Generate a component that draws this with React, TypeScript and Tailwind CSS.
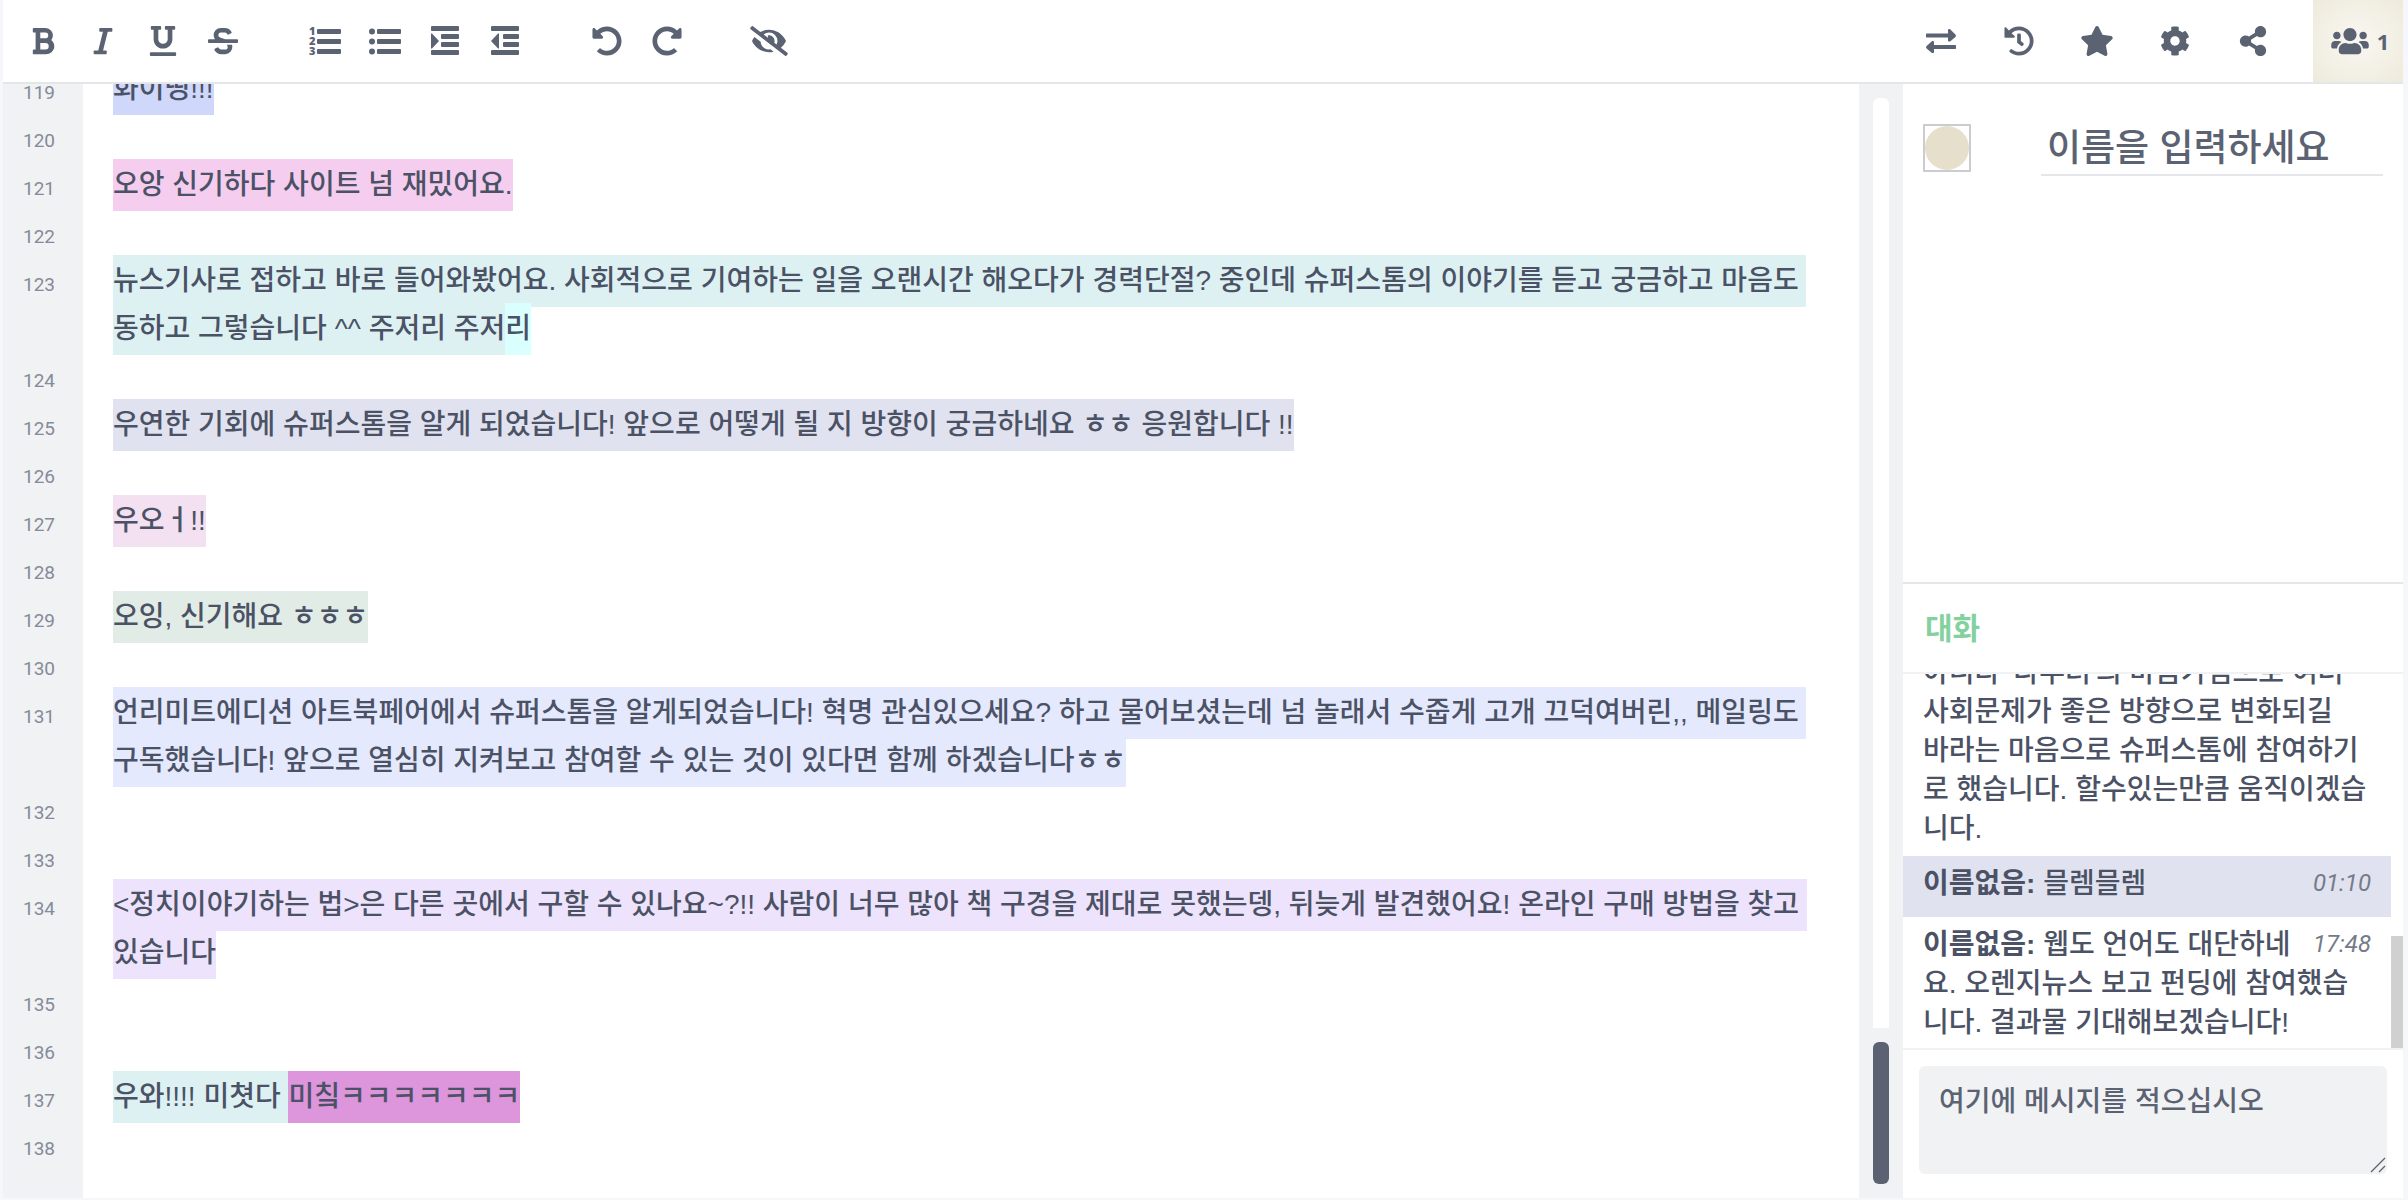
import { ReactNode } from "react";
import {
  FaBold,
  FaItalic,
  FaUnderline,
  FaStrikethrough,
  FaUndoAlt,
  FaRedoAlt,
  FaEyeSlash,
  FaHistory,
  FaStar,
  FaCog,
  FaShareAlt,
  FaUsers,
} from "react-icons/fa";

interface Part {
  text: string;
  color: string;
}

interface Line {
  no: number;
  parts: Part[];
}

interface Message {
  author?: string;
  text: string;
  time?: string;
  className: string;
}

interface Tool {
  label: string;
  icon: ReactNode;
}

const icon = "w-auto h-[30px]";
const wideIcon = "w-[38px] h-[30px] shrink-0";

const ListOlIcon = () => (
  <svg viewBox="0 0 32 30" className="h-[30px]" fill="currentColor" aria-hidden="true">
    <g fontFamily="Open Sans, sans-serif" fontWeight="800" fontSize="11">
      <text x="0" y="9">1</text>
      <text x="0" y="19">2</text>
      <text x="0" y="29">3</text>
    </g>
    <rect x="8" y="3" width="24" height="5" rx="1" />
    <rect x="8" y="13" width="24" height="5" rx="1" />
    <rect x="8" y="23" width="24" height="5" rx="1" />
  </svg>
);

const ListUlIcon = () => (
  <svg viewBox="0 0 32 30" className="h-[30px]" fill="currentColor" aria-hidden="true">
    <circle cx="3" cy="5.5" r="3" />
    <circle cx="3" cy="15.5" r="3" />
    <circle cx="3" cy="25.5" r="3" />
    <rect x="8" y="3" width="24" height="5" rx="1" />
    <rect x="8" y="13" width="24" height="5" rx="1" />
    <rect x="8" y="23" width="24" height="5" rx="1" />
  </svg>
);

const IndentIcon = ({ out = false }: { out?: boolean }) => (
  <svg viewBox="0 0 28 30" className="h-[30px]" fill="currentColor" aria-hidden="true">
    <rect x="0" y="0" width="28" height="5" rx="1" />
    <rect x={out ? 12 : 10} y="8" width={out ? 16 : 18} height="5" rx="1" />
    <rect x={out ? 12 : 10} y="16" width={out ? 16 : 18} height="5" rx="1" />
    <rect x="0" y="24" width="28" height="5" rx="1" />
    <path d={out ? "M8 7.5V22.5H7L0 15L7 7.5Z" : "M0 7.5V22.5H1L8 15L1 7.5Z"} />
  </svg>
);

const ExchangeIcon = () => (
  <svg viewBox="0 0 30 30" className="h-[30px]" fill="currentColor" aria-hidden="true">
    <path d="M1 7.5H22V4.2C22 3 23.5 2.6 24.4 3.4L29.4 8.6C30.1 9.3 30.1 10.2 29.4 10.9L24.4 15.2C23.5 16 22 15.6 22 14.4V11.5H1C0.4 11.5 0 11 0 10.4V8.6C0 8 0.4 7.5 1 7.5Z" />
    <path d="M29 19H8V16.2C8 15 6.5 14.6 5.6 15.4L0.6 20.1C-0.1 20.8 -0.1 21.7 0.6 22.4L5.6 26.7C6.5 27.5 8 27.1 8 25.9V23H29C29.6 23 30 22.5 30 21.9V20.1C30 19.5 29.6 19 29 19Z" />
  </svg>
);

const toolGroups: Tool[][] = [
  [
    { label: "굵게", icon: <FaBold className={icon} /> },
    { label: "기울임", icon: <FaItalic className={icon} /> },
    { label: "밑줄", icon: <FaUnderline className={icon} /> },
    { label: "취소선", icon: <FaStrikethrough className={icon} /> },
  ],
  [
    { label: "순서 있는 목록", icon: <ListOlIcon /> },
    { label: "순서 없는 목록", icon: <ListUlIcon /> },
    { label: "들여쓰기", icon: <IndentIcon /> },
    { label: "내어쓰기", icon: <IndentIcon out /> },
  ],
  [
    { label: "실행 취소", icon: <FaUndoAlt className={icon} /> },
    { label: "다시 실행", icon: <FaRedoAlt className={icon} /> },
  ],
  [{ label: "저자 색 지우기", icon: <FaEyeSlash className={wideIcon} /> }],
];

const menuTools: Tool[] = [
  { label: "가져오기/내보내기", icon: <ExchangeIcon /> },
  { label: "시간 슬라이더", icon: <FaHistory className={icon} /> },
  { label: "판 저장", icon: <FaStar className={wideIcon} /> },
  { label: "설정", icon: <FaCog className={icon} /> },
  { label: "공유", icon: <FaShareAlt className={icon} /> },
];

const lines: Line[] = [
  { no: 119, parts: [{ text: "화이띵!!!", color: "bg-[#cfd8fb]" }] },
  { no: 120, parts: [] },
  { no: 121, parts: [{ text: "오앙 신기하다 사이트 넘 재밌어요.", color: "bg-[#f5cdef]" }] },
  { no: 122, parts: [] },
  {
    no: 123,
    parts: [
      {
        text: "뉴스기사로 접하고 바로 들어와봤어요. 사회적으로 기여하는 일을 오랜시간 해오다가 경력단절? 중인데 슈퍼스톰의 이야기를 듣고 궁금하고 마음도 동하고 그렇습니다 ^^ 주저리 주저",
        color: "bg-[#ddf1f3]",
      },
      { text: "리", color: "bg-[#daffff]" },
    ],
  },
  { no: 124, parts: [] },
  {
    no: 125,
    parts: [
      {
        text: "우연한 기회에 슈퍼스톰을 알게 되었습니다! 앞으로 어떻게 될 지 방향이 궁금하네요 ㅎㅎ 응원합니다 !!",
        color: "bg-[#e1e2ef]",
      },
    ],
  },
  { no: 126, parts: [] },
  { no: 127, parts: [{ text: "우오ㅓ!!", color: "bg-[#f3e1f1]" }] },
  { no: 128, parts: [] },
  { no: 129, parts: [{ text: "오잉, 신기해요 ㅎㅎㅎ", color: "bg-[#e2ece6]" }] },
  { no: 130, parts: [] },
  {
    no: 131,
    parts: [
      {
        text: "언리미트에디션 아트북페어에서 슈퍼스톰을 알게되었습니다! 혁명 관심있으세요? 하고 물어보셨는데 넘 놀래서 수줍게 고개 끄덕여버린,, 메일링도 구독했습니다! 앞으로 열심히 지켜보고 참여할 수 있는 것이 있다면 함께 하겠습니다ㅎㅎ",
        color: "bg-[#e4e9fd]",
      },
    ],
  },
  { no: 132, parts: [] },
  { no: 133, parts: [] },
  {
    no: 134,
    parts: [
      {
        text: "<정치이야기하는 법>은 다른 곳에서 구할 수 있나요~?!! 사람이 너무 많아 책 구경을 제대로 못했는뎅, 뒤늦게 발견했어요! 온라인 구매 방법을 찾고 있습니다",
        color: "bg-[#eee3fc]",
      },
    ],
  },
  { no: 135, parts: [] },
  { no: 136, parts: [] },
  {
    no: 137,
    parts: [
      { text: "우와!!!! 미쳣다 ", color: "bg-[#ddf1f3]" },
      { text: "미칰ㅋㅋㅋㅋㅋㅋㅋ", color: "bg-[#dd95dc]" },
    ],
  },
  { no: 138, parts: [] },
];

const messages: Message[] = [
  {
    text: "아니라 '나부터'의 마음가짐으로 여러 사회문제가 좋은 방향으로 변화되길\n바라는 마음으로 슈퍼스톰에 참여하기로 했습니다. 할수있는만큼 움직이겠습니다.",
    className: "pb-2",
  },
  { author: "이름없음:", text: "믈렘믈렘", time: "01:10", className: "bg-[#e1e2ef] pt-2 pb-[14px]" },
  {
    author: "이름없음:",
    text: "웹도 언어도 대단하네요. 오렌지뉴스 보고 펀딩에 참여했습니다. 결과물 기대해보겠습니다!",
    time: "17:48",
    className: "pt-2 pb-[6px]",
  },
];

const Toolbar = () => (
  <header className="flex h-[84px] shrink-0 justify-between border-b-2 border-[#e4e6ea] bg-white text-[#5b6373]">
    <div className="flex gap-[42px] pl-[10px]">
      {toolGroups.map((group, index) => (
        <div key={index} className="flex">
          {group.map((tool) => (
            <button key={tool.label} aria-label={tool.label} className="flex w-[60px] items-center justify-center">
              {tool.icon}
            </button>
          ))}
        </div>
      ))}
    </div>
    <div className="flex">
      {menuTools.map((tool) => (
        <button key={tool.label} aria-label={tool.label} className="flex w-[78px] items-center justify-center">
          {tool.icon}
        </button>
      ))}
      <button
        aria-label="사용자"
        className="ml-[21px] flex w-[90px] items-center justify-center gap-2 bg-radial from-[#f9f7f2] to-[#eeeadb] pl-1 font-['Open_Sans',sans-serif] text-[22px] font-bold"
      >
        <FaUsers className={wideIcon} />
        <span>1</span>
      </button>
    </div>
  </header>
);

const Editor = () => (
  <main className="flex min-w-0 flex-1 flex-col justify-end overflow-hidden bg-white">
    {lines.map((line) => (
      <div key={line.no} className="flex shrink-0">
        <div className="w-20 shrink-0 bg-[#f1f2f4] pl-5 font-[Roboto,sans-serif] text-[19px] leading-[56px] font-normal text-[#848b99]">
          <div className="h-12">{line.no}</div>
        </div>
        <p className="min-w-0 flex-1 pr-8 pl-[30px] text-[28px] leading-[48px] break-keep whitespace-pre-wrap">
          {line.parts.map((part, index) => (
            <span key={index} className={`${part.color} pt-[10px] pb-[11px]`}>
              {part.text}
            </span>
          ))}
        </p>
      </div>
    ))}
    <div className="h-[29px] w-20 shrink-0 bg-[#f1f2f4]" />
  </main>
);

const Scrollbar = () => (
  <div className="flex w-11 shrink-0 flex-col gap-[14px] bg-[#f1f2f4] p-[14px]">
    <div className="flex-1 rounded-t-md bg-white" />
    <div className="h-[142px] rounded-md bg-[#5b6373]" />
  </div>
);

const UserPanel = () => (
  <section className="flex h-[500px] shrink-0 items-start border-b-2 border-[#e4e6ea] px-5 pt-10">
    <button aria-label="색상" className="h-12 w-12 border-2 border-[#cbcccf]">
      <div className="h-full w-full rounded-full bg-[#e6dfcc]" />
    </button>
    <input
      aria-label="이름"
      placeholder="이름을 입력하세요"
      className="ml-[70px] h-[52px] min-w-0 flex-1 border-b-2 border-[#e4e6ea] pl-[6px] text-[37px] outline-none placeholder:text-[#5b6373]"
    />
  </section>
);

const Chat = () => (
  <section className="flex min-h-0 flex-1 flex-col">
    <h2 className="h-[90px] shrink-0 border-b-2 border-[#f1f2f4] pl-[22px] text-[30px] leading-[90px] font-bold text-[#83d19f]">
      대화
    </h2>
    <div className="flex min-h-0 flex-1">
      <div className="flex min-w-0 flex-1 flex-col justify-end overflow-hidden">
        {messages.map((message, index) => (
          <div key={index} className={`${message.className} shrink-0 px-5 text-[28px] leading-[39px] whitespace-pre-line`}>
            {message.time && (
              <time className="float-right ml-2 font-[Roboto,sans-serif] text-[24px] font-normal text-[#747b89] italic">
                {message.time}
              </time>
            )}
            {message.author && <b>{message.author} </b>}
            {message.text}
          </div>
        ))}
      </div>
      <div className="flex w-3 flex-col justify-end">
        <div className="h-28 bg-[#d0d0d0]" />
      </div>
    </div>
    <div className="relative shrink-0 border-t-2 border-[#f1f2f4] px-4 pt-4 pb-6">
      <textarea
        aria-label="메시지"
        placeholder="여기에 메시지를 적으십시오"
        className="block h-[108px] w-full resize-none rounded-md bg-[#f1f2f4] px-5 py-4 text-[28px] leading-[39px] outline-none placeholder:text-[#5b6373]"
      />
      <svg viewBox="0 0 16 16" className="absolute right-[17px] bottom-[25px] h-4 w-4" stroke="#5f6164" strokeWidth="1.3">
        <path d="M1 15L15 1M9 15L15 9" />
      </svg>
    </div>
  </section>
);

export default function App() {
  return (
    <div className="flex h-screen flex-col bg-[#f6f7fb] pr-[5px] pb-[2px] pl-[3px] font-['Liberation_Sans','Noto_Sans_CJK_KR',sans-serif] font-medium text-[#4b5265]">
      <Toolbar />
      <div className="flex min-h-0 flex-1">
        <Editor />
        <Scrollbar />
        <aside className="flex w-[500px] shrink-0 flex-col bg-white">
          <UserPanel />
          <Chat />
        </aside>
      </div>
    </div>
  );
}
